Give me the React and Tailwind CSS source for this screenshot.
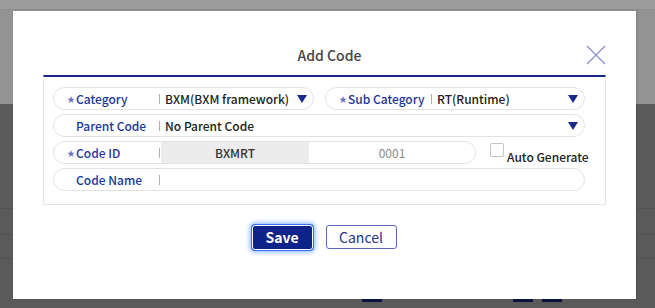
import React from 'react';

const font = "font-[family-name:'Noto_Sans_CJK_KR','Noto_Sans',sans-serif]";

function Label({ text, required }) {
  return (
    <div className="flex items-center w-[105px] shrink-0 pl-[13px] text-[12px] font-medium text-[#22369a]">
      <span className={`w-[9px] text-[8px] leading-none ${required ? 'text-[#6b70b8]' : 'invisible'}`}>★</span>
      <span className="whitespace-nowrap">{text}</span>
    </div>
  );
}

function Sep() {
  return <span className="w-px h-[10px] bg-[#b0b0b0] shrink-0" />;
}

function Caret() {
  return (
    <svg width="10" height="8" viewBox="0 0 10 8" className="shrink-0">
      <path d="M0 0 H10 L5 8 Z" fill="#1a2a8c" />
    </svg>
  );
}

function SelectField({ label, value, required, className }) {
  return (
    <div className={`flex items-center h-[23px] rounded-full border border-[#e2e2e2] pr-[6px] ${className}`}>
      <Label text={label} required={required} />
      <Sep />
      <span className="flex-1 pl-[5px] text-[12px] font-medium text-[#222] whitespace-nowrap">{value}</span>
      <Caret />
    </div>
  );
}

export default function App() {
  return (
    <div className={`relative w-[655px] h-[308px] overflow-hidden ${font}`}>
      {/* page behind the dim layer */}
      <div className="flex flex-col h-full">
        <div className="h-[10px] bg-[#9c9c9c] border-b border-[#8f8f8f]" />
        <div className="h-[94px] bg-[#939393]" />
        <div className="flex-1 bg-[#5a5a5a] flex flex-col">
          <div className="h-[105px] border-b border-[#525252]" />
          <div className="h-[26px] border-b border-[#525252]" />
          <div className="h-[24px] border-b border-[#525252]" />
          <div className="flex-1 relative">
            <div className="absolute left-[362px] top-[40px] w-[20px] h-[3px] bg-[#0d1440]" />
            <div className="absolute left-[513px] top-[40px] w-[20px] h-[3px] bg-[#0d1440]" />
            <div className="absolute left-[542px] top-[40px] w-[20px] h-[3px] bg-[#0d1440]" />
          </div>
        </div>
      </div>

      {/* modal */}
      <div className="absolute left-[13px] top-[11px] w-[623px] h-[288px] bg-white px-[30px] shadow-[1px_0_2px_rgba(0,0,0,0.15)]">
        <div className="relative flex items-center h-[20px] mt-[34px] mb-[10px]">
          <h2 className="flex-1 text-center pl-[10px] text-[14px] font-medium text-[#444]">Add Code</h2>
          <svg width="20" height="20" viewBox="0 0 20 20" className="absolute right-0 top-0">
            <path d="M1 1 L19 19 M19 1 L1 19" stroke="#8c93cf" strokeWidth="1.4" />
          </svg>
        </div>

        <div className="border border-[#e6e6e6] border-t-2 border-t-[#1a2a8c] pt-[10px] pb-[13px] pl-[9px] pr-[20px] flex flex-col gap-[4px]">
          <div className="flex gap-[11px]">
            <SelectField className="w-[261px]" label="Category" value="BXM(BXM framework)" required />
            <SelectField className="flex-1" label="Sub Category" value="RT(Runtime)" required />
          </div>

          <SelectField label="Parent Code" value="No Parent Code" />

          <div className="flex items-center">
            <div className="flex items-center h-[23px] w-[423px] shrink-0 rounded-full border border-[#e2e2e2] overflow-hidden">
              <Label text="Code ID" required />
              <Sep />
              <div className="w-[148px] ml-[1px] h-full bg-[#ececec] flex items-center justify-center text-[12px] font-medium text-[#333]">BXMRT</div>
              <div className="flex-1 text-center text-[12px] text-[#888]">0001</div>
            </div>
            <div className="flex items-start ml-[14px] h-[23px] pt-[2px]">
              <span className="w-[14px] h-[14px] shrink-0 border border-[#c4c4c4] rounded-[2px] bg-white" />
              <span className="ml-[3px] mt-[6px] text-[12px] font-medium leading-[16px] text-[#222] whitespace-nowrap">Auto Generate</span>
            </div>
          </div>

          <div className="flex items-center h-[23px] rounded-full border border-[#e2e2e2]">
            <Label text="Code Name" />
            <Sep />
          </div>
        </div>

        <div className="flex justify-center gap-[13px] mt-[20px] pr-[1px]">
          <button className="w-[61px] h-[25px] bg-[#0c2389] text-white text-[14px] font-semibold rounded-[3px] border border-white shadow-[0_0_0_1px_#3b6ff0,0_0_5px_2px_#7fb0ff]">
            Save
          </button>
          <button className="w-[71px] h-[24px] bg-white text-[#22338f] text-[14px] rounded-[3px] border border-[#5b67b5]">
            Cancel
          </button>
        </div>
      </div>
    </div>
  );
}
